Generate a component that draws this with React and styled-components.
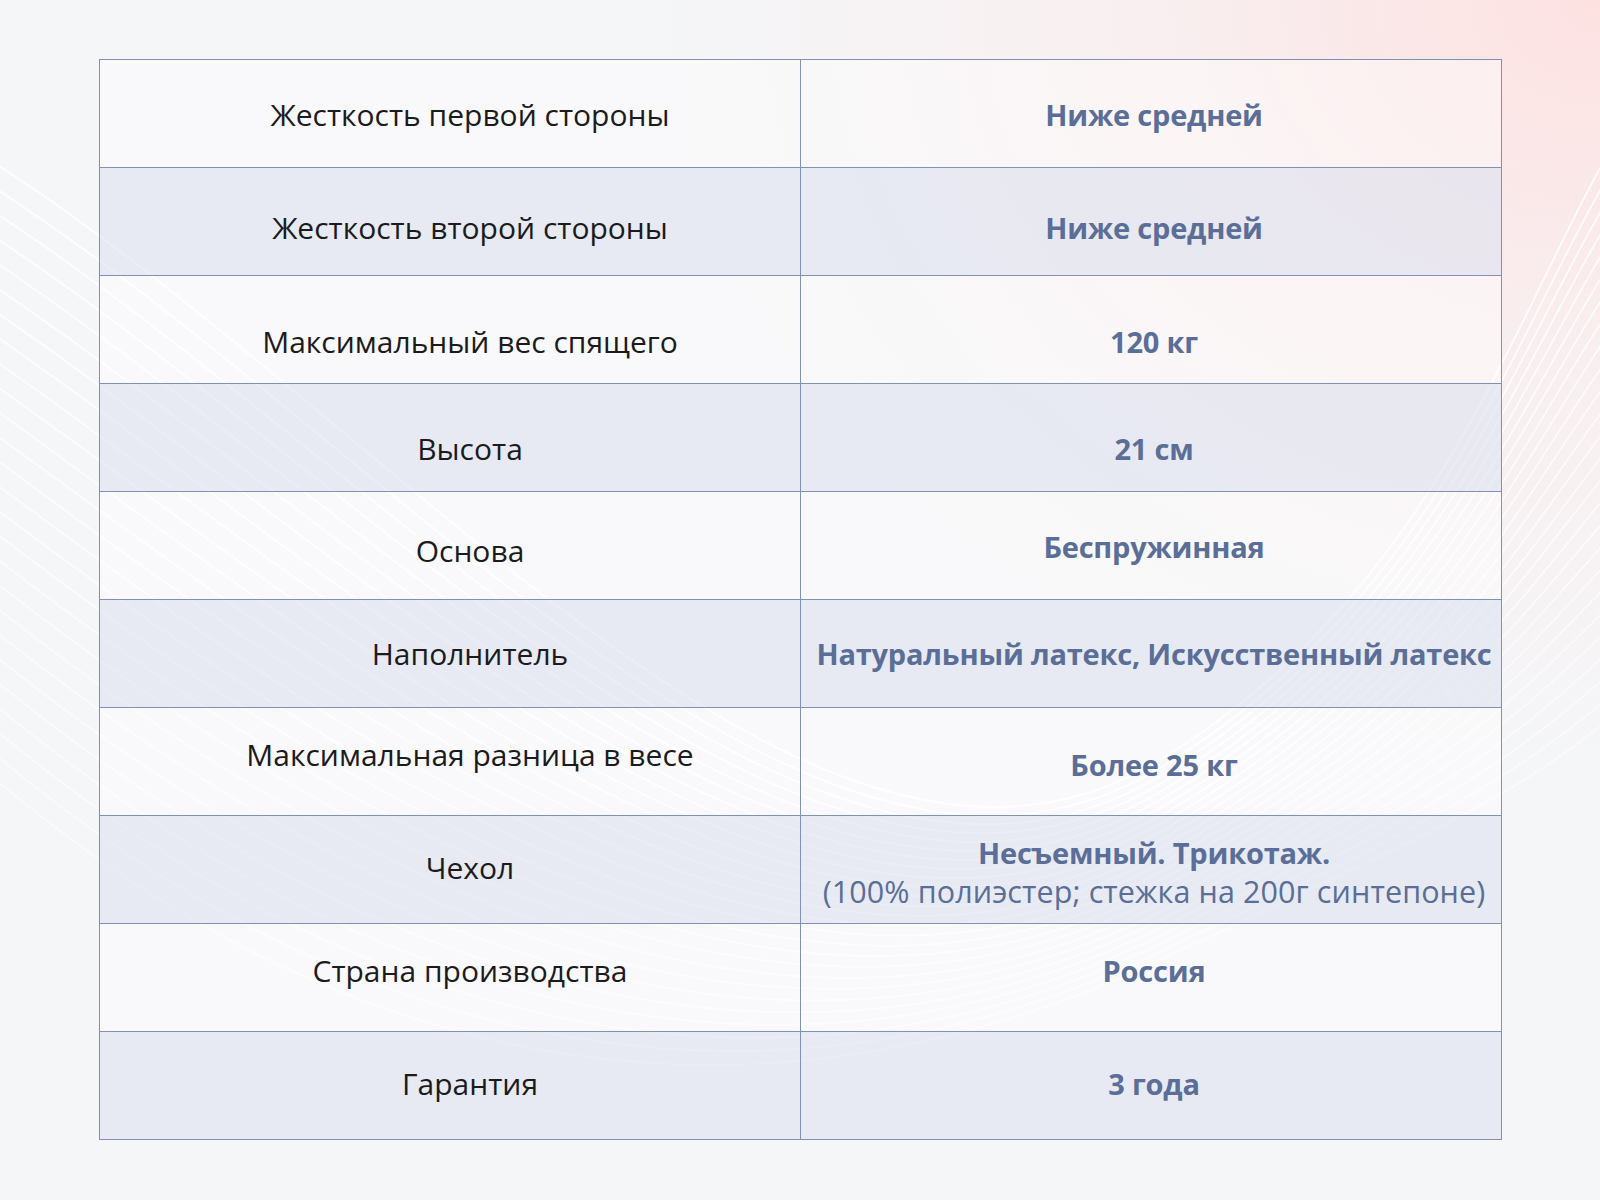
import React from "react";
import styled, { createGlobalStyle } from "styled-components";

const Global = createGlobalStyle`
    html, body {
        margin : 0;
        padding : 0;
    }
    body {
        font-family : "Open Sans", "Noto Sans", sans-serif;
    }
`

const Page = styled.div`
    position : relative;
    width : 1600px;
    height : 1200px;
    overflow : hidden;
    background-color : #f5f6f8;
    background-image :
        radial-gradient(ellipse 950px 760px at 100% 0%, rgba(253, 225, 225, 1) 0%, rgba(252, 232, 232, 0.55) 45%, rgba(245, 246, 248, 0) 100%);
    padding : 59px 0 0 99px;
    box-sizing : border-box;
`

const Waves = styled.svg`
    position : absolute;
    inset : 0;
    width : 1600px;
    height : 1200px;
    pointer-events : none;
`

const Table = styled.div`
    position : relative;
    width : 1403px;
    border : 1px solid #8191b3;
    box-sizing : border-box;
`

const Row = styled.div`
    display : grid;
    grid-template-columns : 700px 1px 700px;
    height : 107px;
    border-top : ${p => (p.$first ? "none" : "1px solid #8191b3")};
    background : ${p => (p.$alt ? "rgba(221, 227, 240, 0.6)" : "rgba(255, 255, 255, 0.4)")};
`

const Divider = styled.div`
    background : #8191b3;
`

const Cell = styled.div`
    display : flex;
    flex-direction : column;
    align-items : center;
    justify-content : center;
    text-align : center;
    box-sizing : border-box;
    padding-left : ${p => (p.$side === "label" ? 40 : 6)}px;
    padding-top : ${p => Math.max(0, p.$shift * 2)}px;
    padding-bottom : ${p => Math.max(0, -p.$shift * 2)}px;
`

const Label = styled.span`
    font-size : 30px;
    line-height : 39px;
    color : #1b1b1d;
`

const Value = styled.span`
    font-size : 29px;
    line-height : 39px;
    font-weight : 700;
    color : #5a6e97;
    letter-spacing : -0.2px;
`

const Note = styled.span`
    font-size : 30.5px;
    line-height : 39px;
    color : #5a6e97;
    letter-spacing : 0.1px;
    white-space : nowrap;
`

const rows = [
    { label : "Жесткость первой стороны", value : "Ниже средней", ls : 1, vs : 1 },
    { label : "Жесткость второй стороны", value : "Ниже средней", ls : 6, vs : 6 },
    { label : "Максимальный вес спящего", value : "120 кг", ls : 12, vs : 12 },
    { label : "Высота", value : "21 см", ls : 11, vs : 11 },
    { label : "Основа", value : "Беспружинная", ls : 5, vs : 1 },
    { label : "Наполнитель", value : "Натуральный латекс, Искусственный латекс", ls : 0, vs : 0 },
    { label : "Максимальная разница в весе", value : "Более 25 кг", ls : -7, vs : 3 },
    { label : "Чехол", value : "Несъемный. Трикотаж.", note : "(100% полиэстер; стежка на 200г синтепоне)", ls : -2, vs : 2 },
    { label : "Страна производства", value : "Россия", ls : -7, vs : -7 },
    { label : "Гарантия", value : "3 года", ls : -2, vs : -2 },
];

// decorative white lines sweeping across the background
const wavePaths = () => {
    const out = [];
    for (let i = 0; i < 26; i++) {
        const y0 = 130 + i * 24;
        const d = `M -60 ${y0} C 360 ${y0 + 240 + i * 6}, 800 ${980 + i * 6}, 1160 ${760 + i * 8} S 1540 ${140 + i * 26}, 1720 ${20 + i * 24}`;
        out.push(<path key={i} d={d} fill="none" stroke="#ffffff" strokeWidth="1.8" strokeOpacity={0.85 - i * 0.015} />);
    }
    return out;
}

const App = () => {
    return(
        <Page>
            <Global />
            <Waves viewBox="0 0 1600 1200">{wavePaths()}</Waves>
            <Table>
                {rows.map((r, i) => (
                    <Row key={r.label} $first={i === 0} $alt={i % 2 === 1}>
                        <Cell $side="label" $shift={r.ls}>
                            <Label>{r.label}</Label>
                        </Cell>
                        <Divider />
                        <Cell $side="value" $shift={r.vs}>
                            <Value>{r.value}</Value>
                            {r.note && <Note>{r.note}</Note>}
                        </Cell>
                    </Row>
                ))}
            </Table>
        </Page>
    );
}

export default App;
